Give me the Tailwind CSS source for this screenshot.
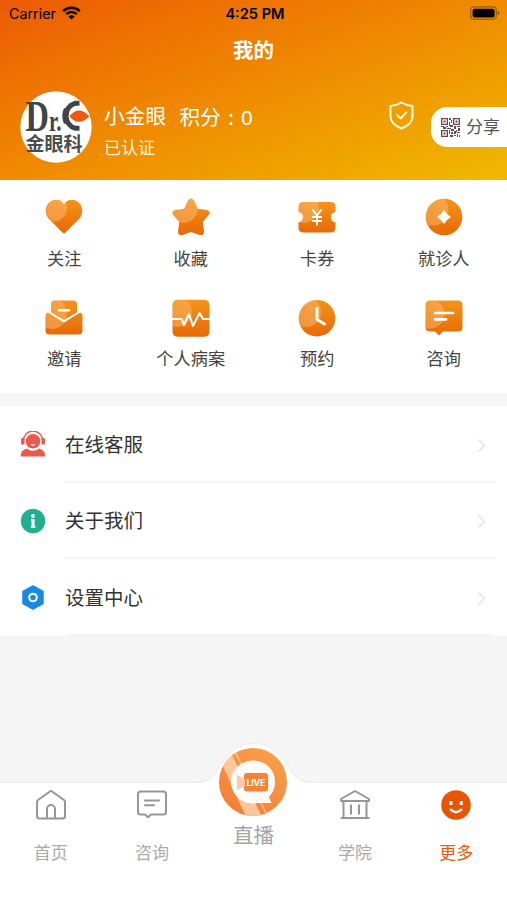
<!DOCTYPE html>
<html lang="zh-CN">
<head>
<meta charset="utf-8">
<meta name="viewport" content="width=device-width, initial-scale=1">
<title>我的</title>
<script src="https://cdn.jsdelivr.net/npm/@tailwindcss/browser@4"></script>
</head>
<body class="bg-[#f5f5f5] font-['Inter','Noto_Sans_CJK_SC',sans-serif]">
<svg class="absolute size-0" aria-hidden="true">
  <defs>
    <linearGradient id="og" x1="0" y1="0" x2="0" y2="1"><stop offset="0" stop-color="#f6931c"/><stop offset="1" stop-color="#e66a04"/></linearGradient>
    <linearGradient id="shine" x1="0" y1="0" x2="1" y2="1"><stop offset="0" stop-color="#fff" stop-opacity=".04"/><stop offset="1" stop-color="#ffc880" stop-opacity=".45"/></linearGradient>
  </defs>
</svg>
<div class="flex h-[900px] w-[507px] flex-col overflow-hidden">

  <header class="h-[180px] shrink-0 bg-[linear-gradient(160deg,#ed5a04_0%,#ef8601_45%,#f0b900_100%)]">
    <div class="grid h-7 grid-cols-3 items-center pl-[9px] pr-[7px] text-black">
      <div class="flex items-center gap-[6px] text-[14.3px] leading-7">
        <span>Carrier</span>
        <svg class="h-[14px] w-[19px] -translate-y-px" viewBox="0 0 19 14"><path d="M1.2 5.2a11.8 11.8 0 0 1 16.6 0M4.2 8.2a7.6 7.6 0 0 1 10.6 0" fill="none" stroke="#000" stroke-width="2.5"/><path d="M6.4 10.5a4.4 4.4 0 0 1 6.2 0L9.5 13.6z"/></svg>
      </div>
      <div class="-mr-px whitespace-nowrap text-center text-[14.6px] font-semibold leading-7">4:25 PM</div>
      <svg class="ml-auto h-[14px] w-[30px] -translate-y-px" viewBox="0 0 30 14"><rect x=".7" y=".9" width="25.6" height="12.4" rx="3.5" fill="none" stroke="#000" stroke-opacity=".35" stroke-width="1.2"/><rect x="2.6" y="2.7" width="22" height="8.8" rx="2"/><path d="M27.6 5v4q1.8-.6 1.8-2t-1.8-2" fill-opacity=".45"/></svg>
    </div>
    <h1 class="mt-[8px] text-center text-[20.5px] font-bold leading-[30px] text-white">我的</h1>
    <div class="mt-[25px] flex h-[72px] pl-[20px] text-white">
      <svg class="size-[72px] shrink-0" viewBox="0 0 72 72">
        <circle cx="36" cy="36" r="35.7" fill="#fff"/>
        <text x="5.500" y="39.500" font-family="Liberation Serif" font-weight="700" fill="#414446" textLength="36" lengthAdjust="spacingAndGlyphs"><tspan font-size="45">D</tspan><tspan font-size="29">r.</tspan></text>
        <path d="M59.500 12.200h-4A13 13 0 0 0 55.500 37.300h4" fill="none" stroke="#414446" stroke-width="5"/>
        <path d="M44 17q-3.500 8 0 16l5-2V19z" fill="#414446"/>
        <path d="M48 25.500q10-13 22 0q-12 12-22 0" fill="#fff"/>
        <path d="M49.300 25.300q9.500-11.500 20 0q-10.500 11-20 0" fill="#ee5810"/>
        <text x="5.500" y="59.500" font-family="Noto Sans CJK SC" font-size="19" font-weight="700" fill="#4a4d4f" textLength="57">金眼科</text>
      </svg>
      <div class="ml-[12px] w-[285px] pt-[12px]">
        <p class="flex gap-[13.500px] text-[20.700px] leading-7"><span>小金眼</span><span>积分<span class="inline-block w-[20px] text-center">:</span><span class="font-['Noto_Sans']">0</span></span></p>
        <p class="mt-[3px] text-[17px] leading-[26px] text-[#fff4dc]">已认证</p>
      </div>
      <svg class="mt-[10px] h-[29px] w-[25px]" viewBox="0 0 25 29" fill="none" stroke="#fff6dc" stroke-width="2" stroke-linejoin="round" stroke-linecap="round"><path d="M12.5 1.500Q8 4.500 1.500 5v10.500c0 5.500 5 9.500 11 12 6-2.500 11-6.500 11-12V5Q17 4.500 12.500 1.500z"/><path d="m8 14 3.700 3.500 5.500-6"/></svg>
      <div class="ml-[17px] mt-[16px] flex h-10 w-[76px] items-center gap-[6px] rounded-l-[16px] bg-white pl-[10px] text-[17px] text-[#555]">
        <svg class="size-[19px] shrink-0" viewBox="0 0 19 19" fill="#65494e"><path fill-rule="evenodd" d="M0 0h7v7H0zM1.300 1.300v4.400h4.400V1.300zM2.500 2.500h2v2h-2zM12 0h7v7h-7zM13.300 1.300v4.400h4.400V1.300zM14.500 2.500h2v2h-2zM0 12h7v7H0zM1.300 13.300v4.400h4.400v-4.400zM2.500 14.500h2v2h-2z"/><path d="M8 0h2v2H8zM10 2h1v3h-1zM8 4h1v4H8zM0 8h3v1H0zM2 9h3v2H2zM5 8h2v1H5zM6 10h4v1H6zM9 7h3v2H9zM13 8h2v3h-2zM16 8h3v1h-3zM17 10h2v3h-2zM10 11h3v2h-3zM8 12h1v4H8zM10 14h2v2h-2zM13 13h2v3h-2zM15 12h1v2h-1zM16 14h3v1h-3zM9 17h3v2H9zM13 17h2v1h-2zM16 16h1v3h-1zM18 17h1v2h-1z"/></svg>
        <span class="whitespace-nowrap pt-[2px]">分享</span>
      </div>
    </div>
  </header>

  <section class="grid h-[213px] shrink-0 grid-cols-4 content-start gap-y-[28px] bg-white pl-px pt-[18px] text-center text-[17.200px] leading-6 text-[#444]">
    <a class="flex h-[73px] flex-col items-center justify-between">
      <svg class="size-[38px]" viewBox="0 0 38 38"><clipPath id="c1"><path id="p1" d="M17.500 34.500 3.500 20.500C-1.500 14 .5 5 8 2.300Q15 .5 19 6.300 23 .5 30 2.300c7.500 2.700 9.500 11.700 4.500 18.200L20.500 34.500q-1.500 1.300-3 0z"/></clipPath><use href="#p1" fill="url(#og)"/><circle cx="8" cy="9.500" r="14" fill="url(#shine)" clip-path="url(#c1)"/></svg><span>关注</span></a>
    <a class="flex h-[73px] flex-col items-center justify-between">
      <svg class="size-[38px]" viewBox="0 0 38 38"><clipPath id="c2"><path id="p2" d="M16 2.500q3-4 6 0l3.800 8.300 9.200 1.200q4 1 2 4.500L30.800 24l1.200 9.500q0 4.500-4.500 3.400L19 34l-8.500 2.900q-4.500 1.100-4.500-3.400L7.200 24 1 16.500q-2-3.500 2-4.500l9.200-1.200z"/></clipPath><use href="#p2" fill="url(#og)"/><circle cx="11" cy="10" r="15" fill="url(#shine)" clip-path="url(#c2)"/></svg><span>收藏</span></a>
    <a class="flex h-[73px] flex-col items-center justify-between">
      <svg class="size-[38px]" viewBox="0 0 38 38"><clipPath id="c3"><path id="p3" d="M5.500 4h27q5 0 5 5v5a5.200 5.200 0 0 0 0 10.300V29.500q0 5-5 5h-27q-5 0-5-5v-5.200a5.200 5.200 0 0 0 0-10.300V9q0-5 5-5z"/></clipPath><use href="#p3" fill="url(#og)"/><circle cx="6" cy="10" r="15" fill="url(#shine)" clip-path="url(#c3)"/><path d="m14.500 11.500 4.500 6 4.500-6M19 17.500v10M14 19h10M14 23h10" fill="none" stroke="#fff" stroke-width="2"/></svg><span>卡券</span></a>
    <a class="flex h-[73px] flex-col items-center justify-between">
      <svg class="size-[38px]" viewBox="0 0 38 38"><clipPath id="c4"><circle cx="19" cy="19" r="18.300"/></clipPath><circle cx="19" cy="19" r="18.300" fill="url(#og)"/><circle cx="8" cy="12" r="15.500" fill="url(#shine)" clip-path="url(#c4)"/><path d="M19 12q2.500 4.500 7 7-4.500 2.500-7 7-2.500-4.500-7-7 4.500-2.500 7-7z" fill="#fff"/></svg><span>就诊人</span></a>
    <a class="flex h-[72px] flex-col items-center justify-between">
      <svg class="size-[38px]" viewBox="0 0 38 38"><clipPath id="c5"><path id="p5" d="M6 14V5q0-3.500 3.500-3.500h19Q32 1.500 32 5v9l-13 7zM4 13.500l15 10 15-10q3.500 0 3.500 3.500v14.500q0 4-4 4h-29q-4 0-4-4V17q0-3.500 3.500-3.500z"/></clipPath><use href="#p5" fill="url(#og)"/><circle cx="7" cy="15" r="15" fill="url(#shine)" clip-path="url(#c5)"/><path d="m3 12.500 14.500 9q1.500.8 3 0L35 12.500" fill="none" stroke="#fff" stroke-width="1.800"/><path d="M14 11.300h10" stroke="#fff" stroke-width="2.500" stroke-linecap="round"/></svg><span>邀请</span></a>
    <a class="flex h-[72px] flex-col items-center justify-between">
      <svg class="size-[38px]" viewBox="0 0 38 38"><clipPath id="c6"><rect x=".5" y=".7" width="37" height="37" rx="5"/></clipPath><rect x=".5" y=".7" width="37" height="37" rx="5" fill="url(#og)"/><circle cx="5" cy="13" r="15" fill="url(#shine)" clip-path="url(#c6)"/><path d="M0 20h9.500l2.500 6 5-11 4 12 6.500-13 3.500 6H38" fill="none" stroke="#fff" stroke-width="2" stroke-linejoin="round"/></svg><span>个人病案</span></a>
    <a class="flex h-[72px] flex-col items-center justify-between">
      <svg class="size-[38px]" viewBox="0 0 38 38"><circle cx="19" cy="19.200" r="18.300" fill="url(#og)"/><circle cx="8" cy="13" r="15" fill="url(#shine)" clip-path="url(#c4)"/><path d="M19 9.500v11l7.500 4.500" fill="none" stroke="#fff" stroke-width="2.800" stroke-linecap="round" stroke-linejoin="round"/></svg><span>预约</span></a>
    <a class="flex h-[72px] flex-col items-center justify-between">
      <svg class="size-[38px]" viewBox="0 0 38 38"><clipPath id="c8"><path id="p8" d="M5 1.500h28q4.500 0 4.500 4.500v22q0 4.500-4.500 4.500H18L14 36.500l-4-4H5Q.5 32.500.5 28V6Q.5 1.500 5 1.500z"/></clipPath><use href="#p8" fill="url(#og)"/><circle cx="5" cy="15" r="14.500" fill="url(#shine)" clip-path="url(#c8)"/><path d="M10 14h18M10 20.300h11" stroke="#fff" stroke-width="2.700" stroke-linecap="round"/></svg><span>咨询</span></a>
  </section>

  <section class="mt-[13px] h-[230px] shrink-0 bg-white pl-[20px] pr-3 text-[19.500px] text-[#333]">
    <a class="flex h-[76.500px] items-center">
      <svg class="mr-[19px] size-[26px]" viewBox="0 0 26 26" fill="#ea5a4c"><path d="M.8 25.500c0-5 2-6.800 6.500-8 2.500 3 8.900 3 11.400 0 4.500 1.200 6.500 3 6.500 8z"/><circle cx="13" cy="10.300" r="7.300"/><path d="M3.500 9.500a9.500 9.500 0 0 1 19 0" fill="none" stroke="#ea5a4c" stroke-width="1.300"/><rect x="1" y="6.800" width="3.600" height="7" rx="1.800"/><rect x="21.400" y="6.800" width="3.600" height="7" rx="1.800"/><path d="M10.500 13.300q2.500 3 5 0z" fill="#fff"/></svg>
      <div class="flex h-full flex-1 items-center justify-between border-b-2 border-[#f4f4f4] pr-[9px] pt-[4px]"><span>在线客服</span><svg class="h-[15px] w-[9px]" viewBox="0 0 9 15"><path d="m1.500 1.500 6 6-6 6" fill="none" stroke="#e2e2e2" stroke-width="1.300"/></svg></div>
    </a>
    <a class="flex h-[76.500px] items-center">
      <svg class="mr-[19px] size-[26px]" viewBox="0 0 26 26"><circle cx="13" cy="13" r="12.200" fill="#22ae90"/><circle cx="13" cy="8" r="1.900" fill="#fff"/><path d="M11 11h3.600v7.500h.9v1.400H11v-1.400h.5v-6H11z" fill="#fff"/></svg>
      <div class="flex h-full flex-1 items-center justify-between border-b-2 border-[#f4f4f4] pr-[9px] pt-[4px]"><span>关于我们</span><svg class="h-[15px] w-[9px]" viewBox="0 0 9 15"><path d="m1.500 1.500 6 6-6 6" fill="none" stroke="#e2e2e2" stroke-width="1.300"/></svg></div>
    </a>
    <a class="flex h-[76.500px] items-center">
      <svg class="mr-[19px] size-[26px]" viewBox="0 0 26 26"><path d="M13 2 23 7.500v12L13 25 3 19.500v-12z" fill="#168be0" stroke="#168be0" stroke-width="1.500" stroke-linejoin="round"/><circle cx="13" cy="13.500" r="3.800" fill="none" stroke="#fff" stroke-width="2"/></svg>
      <div class="flex h-full flex-1 items-center justify-between border-b-2 border-[#f4f4f4] pr-[9px] pt-[4px]"><span>设置中心</span><svg class="h-[15px] w-[9px]" viewBox="0 0 9 15"><path d="m1.500 1.500 6 6-6 6" fill="none" stroke="#e2e2e2" stroke-width="1.300"/></svg></div>
    </a>
  </section>

  <nav class="relative mt-auto grid h-[118px] shrink-0 grid-cols-5 border-t border-[#eee] bg-white text-center text-[17px] leading-6 text-[#aaa]">
    <svg class="absolute left-[193px] top-[-41px] h-[43px] w-[122px]" viewBox="0 0 122 43"><path d="M0 41.500C18 41.500 20 34 28 23 37 9 46 1.500 61 1.500S85 9 94 23c8 11 10 18.500 28 18.500V43H0z" fill="#fff"/><path d="M0 40.500C18 40.500 20 34 28 23 37 9 46 1.500 61 1.500S85 9 94 23c8 11 10 17.500 28 17.500" fill="none" stroke="#ebebeb"/></svg>
    <a class="flex flex-col items-center pt-[6px]"><svg class="mb-[20px] size-8" viewBox="0 0 32 32" fill="none" stroke="#969696" stroke-width="2" stroke-linejoin="round"><path d="M16 1.800 29 11q1 .7 1 2v14q0 2.500-2.500 2.500h-23Q2 29.500 2 27V13q0-1.300 1-2z"/><path d="M12 29v-9a4 4 0 0 1 8 0v9"/></svg><span>首页</span></a>
    <a class="flex flex-col items-center pt-[6px]"><svg class="mb-[20px] size-8" viewBox="0 0 32 32" fill="none" stroke="#969696" stroke-width="2" stroke-linejoin="round" stroke-linecap="round"><path d="M4.500 2.500h23Q30 2.500 30 5v18q0 2.500-2.500 2.500H15l-3 2.800-3-2.800H4.500Q2 25.500 2 23V5q0-2.500 2.500-2.500z"/><path d="M9 11.500h14M9 16.300h9"/></svg><span>咨询</span></a>
    <a class="relative flex flex-col items-center text-[20.500px] leading-7 text-[#a5a5a5]">
      <svg class="-mt-[36px] mb-[5px] size-[70px] shrink-0" viewBox="0 0 70 70"><defs><clipPath id="live"><circle cx="35" cy="35" r="34"/></clipPath><linearGradient id="lg" x1=".8" y1="0" x2=".2" y2="1"><stop stop-color="#f9a14b"/><stop offset="1" stop-color="#f47c35"/></linearGradient></defs><circle cx="35" cy="35" r="34" fill="url(#lg)"/><g clip-path="url(#live)"><path d="M4 17 13 6l31 64H28z" fill="#ffd0ae" fill-opacity=".85"/><path d="m16 3 34 67" stroke="#ffc69c" stroke-width="1.500"/></g><path d="M35 13.500a21.500 21.500 0 1 0 4 42.500h14.500L51 50A21.500 21.500 0 0 0 35 13.500z" fill="#fff" fill-opacity=".95"/><rect x="26" y="26" width="24" height="18.500" rx="3" fill="#f58330"/><path d="m19 28 8 4v7l-8 4z" fill="#fdc9a9"/><text x="28.500" y="38.500" font-family="Inter" font-size="9" font-weight="700" fill="#fff" textLength="19">LIVE</text></svg><span>直播</span></a>
    <a class="flex flex-col items-center pt-[6px]"><svg class="mb-[20px] size-8" viewBox="0 0 32 32" fill="none" stroke="#969696" stroke-width="2" stroke-linejoin="round"><path d="M16 2 2 10v2h28v-2zM4.500 12v16.500M27.500 12v16.500M1.500 29h29"/><path d="M12 15.500v10M20 15.500v10"/></svg><span>学院</span></a>
    <a class="flex flex-col items-center pt-[6px] text-[#ec5b08]"><svg class="mb-[20px] size-8" viewBox="0 0 32 32"><circle cx="16" cy="16" r="14.800" fill="#e95404"/><path d="M11 12v4M21.300 12v4" stroke="#fff" stroke-width="3"/><path d="M10 20q6 6.500 12 0" fill="none" stroke="#fff" stroke-width="2.400"/></svg><span>更多</span></a>
  </nav>
</div>
</body>
</html>
